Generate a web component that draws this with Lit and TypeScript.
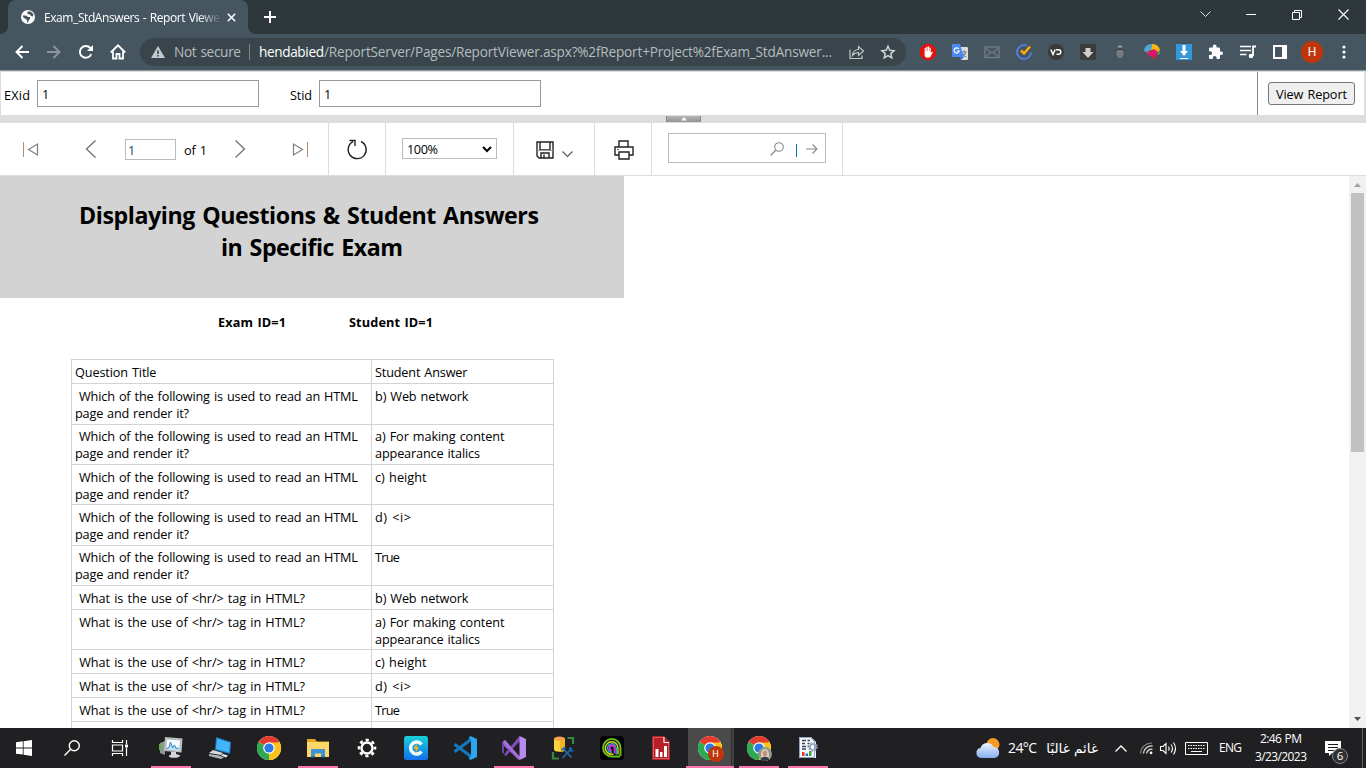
import { LitElement, html, svg, css } from "lit";
import { customElement, property } from "lit/decorators.js";
import { styleMap } from "lit/directives/style-map.js";
import { classMap } from "lit/directives/class-map.js";

/** A single line of text, tracked so that it fills the requested width. */
@customElement("fit-text")
class FitText extends LitElement {
  @property() text = "";
  @property({ type: Number }) width = 0;

  static styles = css`
    :host { display: inline-block; white-space: pre; flex: none; }
    .line { display: inline-block; word-spacing: 0.07em; }
  `;

  render() {
    return html`<span class="line">${this.text}</span>`;
  }

  updated() {
    const line = this.renderRoot.querySelector(".line") as HTMLElement;
    line.style.letterSpacing = "0px";
    const natural = line.getBoundingClientRect().width;
    const count = [...this.text].length;
    line.style.letterSpacing = `${(this.width - natural) / Math.max(1, count - 1)}px`;
    this.style.width = `${this.width}px`;
  }
}

const fit = (text: string, width: number, cls = "") =>
  html`<fit-text class=${cls} .text=${text} .width=${width}></fit-text>`;

const icon = (w: number, h: number, body: unknown) =>
  html`<svg width=${w} height=${h} viewBox="0 0 ${w} ${h}" fill="none">${body}</svg>`;

const stroke = (d: string, color = "#fff", width = 1) =>
  svg`<path d=${d} stroke=${color} stroke-width=${width} fill="none"></path>`;
const fill = (d: string, color = "#fff") => svg`<path d=${d} fill=${color}></path>`;

/* ---------- extension icons, 16 x 16 ---------- */
const extensions = [
  icon(16, 16, svg`${fill("M4.7 0h6.6L16 4.7v6.6L11.3 16H4.7L0 11.3V4.7z", "#e1120d")}
    ${fill("M4.6 7.6V4.3c0-.8 1.2-.8 1.2 0V7h.4V3.200c0-.8 1.300-.8 1.300 0V7h.4V2.800c0-.8 1.300-.8 1.300 0V7h.4V4c0-.8 1.200-.8 1.200 0v5l.9-1.100c.6-.6 1.400-.1 1 .6l-2.100 4c-.6.8-1.200 1.200-2.600 1.200-2.400 0-3.400-1.200-3.400-3z")}`),
  icon(16, 16, svg`${fill("M7 3h8a1 1 0 0 1 1 1v11a1 1 0 0 1-1 1H9z", "#dcdcdc")}
    ${stroke("M9.500 8h5M12 6.500V8M13.800 8c-.5 2-1.700 3.500-3.500 4.500M10.500 9.500c.6 1.500 1.800 2.600 3.600 3.300", "#6a7a80", 1.1)}
    ${fill("M1 0h7l3.800 13H1a1 1 0 0 1-1-1V1a1 1 0 0 1 1-1z", "#4a8af4")}
    ${stroke("M6.800 5A2.600 2.600 0 1 0 7.200 7H4.800", "#fff", 1.2)}${fill("M8 13h3.800L9 16z", "#3767c9")}`),
  icon(16, 16, svg`<rect x="1" y="3" width="14" height="10.500" stroke="#6f7a80" stroke-width="1.500"></rect>
    ${stroke("M1.500 3.500l5 5h3l5-5M1.500 13.500l5-5M14.500 13.500l-5-5", "#6f7a80", 1.300)}`),
  icon(16, 16, svg`${stroke("M10.500 1.500A7 7 0 1 0 15 8.500", "#5a78dc", 2)}${stroke("M5 6.500l3 3 6-7", "#ffaa0c", 2.500)}`),
  icon(16, 16, svg`<circle cx="8" cy="8" r="8" fill="#3a3a3c"></circle>${stroke("M2.800 5.500L5 10.500l2.200-5", "#fff", 1.500)}${stroke("M8 5.700h2.500a2.300 2.300 0 0 1 0 4.600H8.500", "#fff", 1.500)}`),
  icon(16, 16, svg`<rect width="16" height="16" rx="1" fill="#3c3c3e"></rect>${fill("M5.500 4h5v4h3L8 14 2.500 8h3z", "#cfcfcf")}`),
  icon(16, 16, svg`${fill("M5.500 3.500c0-3 5-3 5 0z", "#9b9b9b")}<ellipse cx="8" cy="9.500" rx="3.800" ry="4.500" fill="#777b7c"></ellipse>
    ${fill("M5 6c1-2 5-2 6 0z", "#3b3f40")}${stroke("M3 6l2 1M2.500 9.500H4M3 13l2-1.500M13 6l-2 1M13.500 9.500H12M13 13l-2-1.500", "#3b4448", 1)}`),
  icon(16, 16, svg`${fill("M0 7C0 3 3 0 8 0l-1 6-4 2z", "#46a7dc")}${fill("M8 0c4 0 7 2 8 6l-3 3-6-3z", "#f7b512")}
    ${fill("M4 8l6-3 4 3 1 2-5 3-5-1z", "#e0126b")}${fill("M13 9l3-2v3l-2 1z", "#3aa64b")}${fill("M8 12h4l-1 4z", "#d82434")}${fill("M1 7l4 1-1 2z", "#e45728")}`),
  icon(16, 16, svg`<rect width="16" height="16" fill="#3498db"></rect>${fill("M6.500 1h3v6H12l-4 5-4-5h2.500z")}${stroke("M4 14.500h8", "#fff", 1)}`),
  icon(16, 16, svg`${fill("M13.200 7.500H12V4.800A1.300 1.300 0 0 0 10.700 3.500H8.500V2.300a1.800 1.800 0 0 0-3.600 0v1.200H2.300A1.300 1.300 0 0 0 1 4.800v2.500h1.200a1.900 1.900 0 0 1 0 3.800H1v2.600A1.300 1.300 0 0 0 2.300 15h2.500v-1.200a1.900 1.900 0 0 1 3.800 0V15h2.100a1.300 1.300 0 0 0 1.300-1.300v-2.600h1.200a1.800 1.800 0 0 0 0-3.600z")}`),
  icon(16, 16, svg`${stroke("M0 2.500h11M0 6.500h11M0 10.500h6.500", "#fff", 1.700)}${stroke("M13 12V2.500h3", "#fff", 1.800)}<circle cx="11" cy="12" r="2.300" fill="#fff"></circle>`),
  icon(14, 14, svg`<rect x="1" y="1" width="12" height="12" stroke="#fff" stroke-width="2"></rect><rect x="9" y="1" width="4" height="12" fill="#fff"></rect>`),
  html`<div class="avatar">H</div>`,
  icon(4, 14, svg`<circle cx="2" cy="2" r="1.600" fill="#fff"></circle><circle cx="2" cy="7" r="1.600" fill="#fff"></circle><circle cx="2" cy="12" r="1.600" fill="#fff"></circle>`),
];

/* ---------- taskbar icons ---------- */
const chromeMark = svg`
  <circle cx="12" cy="12" r="12" fill="#fff"></circle>
  ${fill("M12 12L1.600 6A12 12 0 0 1 22.400 6z", "#e33b2e")}
  ${fill("M12 12L22.400 6A12 12 0 0 1 12 24z", "#fcc31e")}
  ${fill("M12 12v12A12 12 0 0 1 1.600 6z", "#2da94f")}
  ${fill("M12 6.500h10.700A12 12 0 0 1 12 24l4.800-9.300z", "#fcc31e")}
  <circle cx="12" cy="12" r="5.800" fill="#fff"></circle><circle cx="12" cy="12" r="4.600" fill="#2a79e8"></circle>`;

interface App { art: unknown; open?: boolean; active?: boolean }
const apps: App[] = [
  { open: true, art: icon(24, 24, svg`${fill("M1 7l5-2v14l-5-2z", "#8f9694")}${fill("M0 8h2v6H0z", "#58b33a")}
    ${fill("M6 1l17.500 1.500-1 14L5 15z", "#b9bfc0")}${fill("M8 3.500l13 1-.8 10L7.500 13z", "#f7fbfd")}
    ${fill("M7.500 13l3-1.500 1.500-5 2 5 2-2 1.500 3 3-.5-.3 2.500z", "#bfe2f5")}${stroke("M7.500 12.500l2.500-1 1.500-5.500 2 6 2-3 1.500 3.500 3-.5", "#2787c9", 1)}
    ${fill("M12 15.500l5 .4v2l4 1.400c.5 3-10 3.500-11.500.7l2.500-1.500z", "#d5d8d9")}`) },
  { art: icon(24, 24, svg`${fill("M8 1l15 5-1 12L7 14z", "#1c7dc4")}${fill("M9 2.500l13 4.300-.8 9.700L8 13z", "#42b4f7")}${fill("M5 14l10 3-2 2-12-2z", "#d5dadd")}${fill("M1 18l10 1.500 5 2-3 1.500L1 20z", "#aeb5ba")}${fill("M15 18l5 1.500-2 2-5-2z", "#e5e8ea")}`) },
  { art: icon(24, 24, chromeMark) },
  { open: true, art: icon(24, 24, svg`${fill("M1 3h8l2 2.500h12V21H1z", "#e8a51e")}${fill("M1 6h22v15H1z", "#ffd768")}${fill("M5 13h14v8h-4v-3H9v3H5z", "#3c93d6")}${fill("M9 17.500h6V21H9z", "#ffd768")}${fill("M5 20h4v1.500H5zM15 20h4v1.500h-4z", "#2473b5")}`) },
  { art: icon(20, 20, svg`<circle cx="10" cy="10" r="5.500" stroke="#fff" stroke-width="2.400"></circle>
      <circle cx="10" cy="10" r="8" stroke="#fff" stroke-width="2.600" stroke-dasharray="3.140 3.143" stroke-dashoffset="1.570"></circle>`) },
  { art: icon(24, 24, svg`<defs><linearGradient id="c" x1="0" y1="0" x2="0" y2="1"><stop stop-color="#18d0d5"></stop><stop offset="1" stop-color="#1470ee"></stop></linearGradient></defs>
      <rect width="24" height="24" rx="2.500" fill="url(#c)"></rect>${stroke("M17.500 8.500A6 6 0 1 0 17.500 15.500", "#f4fbff", 3.400)}${fill("M13 6.500L9.500 13H12l-1 5 4-7h-2.500z", "#ffae25")}`) },
  { art: icon(24, 24, svg`${stroke("M1.500 8.300L18 20.500M1.500 15.700L18 3.500", "#1377bd", 3.200)}${fill("M17.500 0L24 3v18l-6.500 3-2-2 2.500-2V4l-2.500-2z", "#2aa5ee")}`) },
  { open: true, art: icon(24, 24, svg`${fill("M1 5l2-1 15 17-1.500 3L0 8z", "#8d5fc4")}${fill("M0 7l2-2v13l-2-1.500z", "#6e42a8")}${fill("M2 18.500L17.500 0l1.500 4L4 20z", "#7b4bb6")}${fill("M3 4l15 17V24L1 7z", "#a070d8")}${fill("M17.500 0L24 3v18l-6.500 3z", "#b88af0")}`) },
  { art: icon(24, 24, svg`${fill("M3 2.500v11c0 3 11 3 11 0v-11z", "#fbd33e")}${fill("M9 2.500h5v11c0 1.500-2 2.200-5 2.200z", "#f3b51f")}<ellipse cx="8.500" cy="2.800" rx="5.500" ry="2.200" fill="#f7a348"></ellipse>
      ${stroke("M16.500 2h5.500v6M2 16v6.500h6", "#348a43", 2.200)}${stroke("M11.500 12l9 9.500M21 12l-9.500 10M10.500 14l4-3M18.500 11.500l1 3 3 .5", "#1c6cb4", 1.700)}`) },
  { art: icon(24, 24, svg`<rect width="24" height="24" rx="3.500" fill="#000"></rect>
      ${stroke("M20.500 20v-8A8.700 8.700 0 1 0 12 20.500h8", "#66bf1d", 2)}${stroke("M18 18.500V12A6.300 6.300 0 1 0 12 18.300h1.500", "#e5da1c", 1.400)}
      ${stroke("M16.200 18.500V12A4.300 4.300 0 1 0 12 16.300", "#19b6da", 1.500)}${stroke("M14.500 17.500V12A2.500 2.500 0 1 0 12 14.500", "#d62ce0", 1.900)}`) },
  { art: icon(18, 24, svg`${fill("M0 0h12l6 6v18H0z", "#b71f27")}${stroke("M1.500 1.500h10v5.200h5v15.800h-15z", "#d98d90", .6)}${stroke("M12 1v5.500h5", "#fff", 1)}${fill("M3.500 13h3v8h-3zM8 16h2.500v5H8zM12 10h3v11h-3z")}`) },
  { active: true, open: true, art: html`<div class="badged">${icon(24, 24, chromeMark)}<span class="profile">H</span></div>` },
  { open: true, art: html`<div class="badged">${icon(24, 24, chromeMark)}<span class="photo">${icon(14, 14, svg`<circle cx="7" cy="7" r="7" fill="#8b9987"></circle>${fill("M3 10c-1-11 9-11 8 0l1 2-4 2-5-2z", "#d8cfbe")}<ellipse cx="7" cy="6.500" rx="2.200" ry="3" fill="#c49377"></ellipse>${fill("M2.500 12c2-3 7-3 9 0-2 2.600-7 2.600-9 0z", "#343b4b")}`)}</span></div>` },
  { open: true, art: icon(20, 24, svg`${fill("M1 1h12l5 5v16H1z", "#f4f8fc")}${stroke("M1.500 1.500h11l4 4v16h-15z", "#8da2bd", 1)}
      ${stroke("M4 4.500h4M4 7.500h3M4 10.500h4M4 13h4M9.500 4.500H12M9.500 7.500h2M9.500 10.500h2", "#3b4657", 1.300)}${fill("M4 16h2.500v4H4z", "#e33a2d")}${fill("M7.500 17.500H10V20H7.500z", "#2a67d1")}${fill("M11 15h2.500v5H11z", "#3ca83f")}
      <circle cx="15" cy="11" r="3" stroke="#8fa5bd" stroke-width="1.600"></circle><circle cx="15" cy="11" r="4.200" stroke="#8fa5bd" stroke-width="1.400" stroke-dasharray="1.650 1.650"></circle>`) },
];

const Q1 = [[" Which of the following is used to read an HTML", 283], ["page and render it?", 114]] as const;
const Q2 = [[" What is the use of <hr/> tag in HTML?", 230]] as const;
const A = {
  b: [["b) Web network", 93.5]], a: [["a) For making content", 129.5], ["appearance italics", 105]],
  c: [["c) height", 51.5]], d: [["d) <i>", 36]], t: [["True", 25]],
} as const;
type Lines = readonly (readonly [string, number])[];
interface Row { h: number; q: Lines; a: Lines; high?: boolean }
const rows: Row[] = [
  { h: 24, q: [["Question Title", 81.5]], a: [["Student Answer", 92.5]] },
  { h: 41, q: Q1, a: A.b }, { h: 40, q: Q1, a: A.a, high: true }, { h: 40, q: Q1, a: A.c }, { h: 41, q: Q1, a: A.d }, { h: 40, q: Q1, a: A.t, high: true },
  { h: 24, q: Q2, a: A.b }, { h: 40, q: Q2, a: A.a }, { h: 24, q: Q2, a: A.c }, { h: 24, q: Q2, a: A.d }, { h: 24, q: Q2, a: A.t },
  { h: 24, q: [], a: [] },
];

@customElement("app-root")
class AppRoot extends LitElement {
  static styles = css`
    :host { display: flex; flex-direction: column; width: 1366px; height: 768px; overflow: hidden; background: #fff; color: #000; font: 12.7px/17px "Open Sans", "Noto Sans", sans-serif; }
    * { box-sizing: border-box; }
    svg { display: block; flex: none; overflow: visible; }
    .tabs { height: 34px; background: #2d373c; display: flex; align-items: stretch; color: #fff; }
    .edge { width: 8px; background: #455660; display: flex; }
    .edge i { flex: 1; background: #2d373c; }
    .edge.l i { border-bottom-right-radius: 8px; }
    .edge.r i { border-bottom-left-radius: 8px; }
    .tab { width: 240px; background: #455660; border-radius: 8px 8px 0 0; display: flex; align-items: center; padding: 0 10px 0 13px; font-size: 12px; }
    .tab .title { width: 176px; margin: 0 7px 0 9px; -webkit-mask-image: linear-gradient(90deg, #000 155px, transparent 178px); mask-image: linear-gradient(90deg, #000 155px, transparent 178px); }
    .plus { display: flex; align-items: center; margin-left: 8px; flex: 1; }
    .win { display: grid; grid-template-columns: repeat(4, 46px); height: 29px; align-items: center; justify-items: center; }
    .nav { height: 37px; background: #455660; border-bottom: 1px solid #8e999f; display: flex; align-items: center; padding: 0 6px; }
    .nav .cell { width: 32px; height: 32px; display: grid; place-items: center; flex: none; }
    .omni { width: 766px; height: 28px; margin: 0 6px 0 6px; border-radius: 14px; background: #39454b; display: flex; align-items: center; padding: 0 11px 0 11px; color: #b4bcc0; font-size: 13.6px; line-height: 20px; }
    .omni fit-text { margin-top: -1px; }
    .omni .warn { margin-right: 9px; }
    .omni .bar { width: 1px; height: 16px; background: #7b868b; margin: 0 9px 0 8px; }
    .host { color: #fff; }
    .share { margin: 0 17px 0 17px; }
    .avatar { width: 22px; height: 22px; border-radius: 50%; background: #bf360c; color: #fff; font: 12px/22px Roboto, sans-serif; text-align: center; }
    .params { height: 44px; border: 1px solid #ddd; border-width: 1px 2px 0 1px; display: flex; align-items: center; padding-left: 3px; }
    .field { height: 27px; width: 222px; border: 1px solid #999; display: flex; align-items: center; padding: 2px 0 0 4px; }
    .label { margin-top: 4px; }
    .box1 { margin: 0 31px 0 7px; } .box2 { margin-left: 7px; }
    .submit { margin-left: auto; width: 107px; height: 43px; border-left: 1px solid #888; padding: 10px 0 0 10px; }
    .btn { width: 87px; height: 23px; border: 1px solid #767676; border-radius: 3px; background: #efefef; padding: 3px 0 0 7px; }
    .split { height: 8px; background: #ddd; display: flex; justify-content: center; padding-top: 1px; }
    .grip { width: 35px; height: 6px; margin-left: 1px; background: linear-gradient(#b7b7b7, #929292); display: grid; place-items: center; border: solid #888; border-width: 0 1px; }
    .tools { height: 53px; border-bottom: 1px solid #ddd; display: flex; }
    .group { border-right: 1px solid #ddd; display: flex; align-items: center; }
    .paging { width: 329px; padding-left: 22px; }
    .gap { width: 47px; } .gap.narrow { width: 28px; } .gap.last { width: 46px; }
    .page { width: 51px; height: 21px; border: 1px solid #bbb; padding: 2px 0 0 2px; margin: 0 8px 0 29px; color: #12496b; }
    .count-of { margin-top: 2px; }
    .refresh { width: 57px; padding-left: 19px; }
    .zoom { width: 128px; padding-left: 16px; }
    .select { width: 95px; height: 21px; border: 1px solid #bbb; display: flex; align-items: center; padding: 2px 4px 0 4px; justify-content: space-between; margin-bottom: 2px; }
    .save { width: 81px; padding: 1px 0 0 22px; gap: 8px; }
    .drop { padding-top: 9px; }
    .print { width: 57px; padding: 1px 0 0 19px; }
    .find { width: 191px; padding-left: 16px; }
    .search { width: 158px; height: 30px; border: 1px solid #bbb; display: flex; align-items: center; justify-content: flex-end; padding: 1px 7px 0 0; margin-bottom: 2px; }
    .cursor { width: 1px; height: 13px; background: #0078b5; margin: 3px 9px 0 12px; }
    .main { height: 552px; display: flex; overflow: hidden; justify-content: space-between; }
    .report { width: 624px; }
    .banner { height: 122px; background: #d3d3d3; padding-top: 23px; display: flex; flex-direction: column; align-items: center; font-size: 23.2px; font-weight: 700; line-height: 32px; }
    .banner .first { margin-right: 6px; }
    .ids { height: 61px; display: flex; padding: 16px 0 0 218px; gap: 63px; font-weight: 700; }
    .table { width: 483px; margin-left: 71px; border: 1px solid #d3d3d3; border-width: 0 1px; }
    .row { display: grid; grid-template-columns: 300px 181px; border-top: 1px solid #d3d3d3; }
    .td { padding: 4px 0 0 3px; display: flex; flex-direction: column; }
    .high .td { padding-top: 3px; }
    .td + .td { border-left: 1px solid #d3d3d3; margin-left: -1px; }
    .scroll { width: 17px; background: #f1f1f1; display: flex; flex-direction: column; align-items: center; padding: 7px 0 7px; }
    .thumb { width: 13px; height: 259px; background: #c1c1c1; margin-top: 6px; margin-bottom: auto; }
    .taskbar { height: 40px; background: #202023; display: flex; align-items: center; color: #fff; font-size: 12px; line-height: 18px; }
    .sys { width: 48px; height: 40px; display: grid; place-items: center; }
    .sys.last { margin-right: 2px; }
    .app { width: 49px; height: 40px; display: grid; place-items: center; border: solid transparent; border-width: 0 4px 0 5px; }
    .app.open { background: linear-gradient(#fe75ae, #fe75ae) bottom / 100% 2px no-repeat padding-box; }
    .app.active { border: 0; background: linear-gradient(#fe75ae, #fe75ae) bottom right / 48px 2px no-repeat, linear-gradient(90deg, transparent 3px, #4a4a4b 3px 46px, #303032 46px 47px, #424244 47px); }
    .badged { position: relative; width: 24px; height: 24px; }
    .profile, .photo { position: absolute; left: 10px; top: 10px; width: 16px; height: 16px; border-radius: 50%; }
    .profile { background: #bf360c; font: 9px/16px Roboto, sans-serif; text-align: center; }
    .photo { left: 11px; top: 11px; }
    .tray { margin-left: auto; display: flex; align-items: center; height: 40px; width: 390px; }
    .temp { font-size: 14px; margin: 0 9px 0 8px; }
    .sky { width: 52px; font: 13.5px/18px "DejaVu Sans", sans-serif; white-space: nowrap; direction: rtl; }
    .up { margin-left: 17px; } .wifi { margin-left: 13px; } .vol { margin-left: 7px; } .kbd { margin-left: 8px; }
    .lang { margin-left: 11px; }
    .clock { width: 54px; margin-left: 12px; display: flex; flex-direction: column; align-items: center; }
    .note { position: relative; margin-left: 17px; }
    .count { position: absolute; left: 7px; top: 7px; width: 16px; height: 16px; border: 1px solid #858585; border-radius: 50%; background: #303033; font-size: 11.5px; line-height: 14px; text-align: center; }
    .peek { width: 1px; height: 40px; background: #66666a; margin-left: 21px; }
  `;

  private renderBrowser() {
    return html`
      <div class="tabs">
        <div class="edge l"><i></i></div>
        <div class="tab">
          ${icon(14, 14, svg`<circle cx="7" cy="7" r="7" fill="#fff"></circle>${fill("M1.500 5.500h3.500l2 1.500h2v2l-1.500 1.500-.5 2h-1V10L2.500 7.500zM6.500 1.500h3L12.300 4l-.3 2.500-2-.5-1-1.500-2.500-.5z", "#455660")}`)}
          <div class="title">${fit("Exam_StdAnswers - Report Viewe", 176)}</div>
          ${icon(9, 9, stroke("M.8.8l7.400 7.400M8.200.8L.8 8.200", "#fff", 1.500))}
        </div>
        <div class="edge r"><i></i></div>
        <div class="plus">${icon(12, 12, stroke("M6 0v12M0 6h12", "#fff", 2))}</div>
        <div class="win">
          ${icon(11, 7, stroke("M.5.5l5 5 5-5", "#dfe2e3"))}
          ${icon(10, 2, stroke("M0 .5h10"))}
          ${icon(10, 10, stroke("M.5 2.500h7v7h-7zM2.500 2.500v-2h7v7h-2"))}
          ${icon(11, 11, stroke("M.5.5l10 10M10.500.5l-10 10", "#fff", 1.100))}
        </div>
      </div>
      <div class="nav">
        <div class="cell">${icon(14, 14, stroke("M14 7H1.500M7.500 1L1.500 7l6 6", "#fff", 1.900))}</div>
        <div class="cell">${icon(14, 14, stroke("M0 7h12.500M6.500 1l6 6-6 6", "#8c979c", 1.900))}</div>
        <div class="cell">${icon(14, 14, svg`${stroke("M12.300 9A5.900 5.900 0 1 1 11.300 3L12.500 4.500", "#fff", 2)}${fill("M14 0v6H8z")}`)}</div>
        <div class="cell">${icon(16, 16, stroke("M3 7.500V14.500h3.500v-4.500h3v4.500H13V7.500M.800 8.500L8 1.300l7.200 7.200", "#fff", 1.800))}</div>
        <div class="omni">
          <span class="warn">${icon(14, 12, svg`${fill("M7 0l7 12H0z", "#c3cacc")}${stroke("M7 4.500v3.500M7 9v1.500", "#39454b", 1.600)}`)}</span>
          ${fit("Not secure", 67)}<span class="bar"></span>
          ${fit("hendabied", 65, "host")}${fit("/ReportServer/Pages/ReportViewer.aspx?%2fReport+Project%2fExam_StdAnswer...", 508)}
          <span class="share">${icon(15, 14, svg`${stroke("M1 4.500v9h12V10.500", "#c3cacc", 1.200)}${stroke("M3.500 10.500c.5-4 2.500-6 6-6V1.500l5 4.500-5 4.500V7.500c-2.500 0-4.500 1-6 3z", "#c3cacc", 1.200)}`)}</span>
          ${icon(14, 14, stroke("M7 1.300l1.800 4 4.300.4-3.300 2.900 1 4.300L7 10.600l-3.800 2.300 1-4.300L.9 5.700l4.300-.4z", "#d4d9db", 1.400))}
        </div>
        ${extensions.map((e) => html`<div class="cell">${e}</div>`)}
      </div>`;
  }

  private renderReportTools() {
    return html`
      <div class="params">
        ${fit("EXid", 26, "label")}
        <div class="field box1">${fit("1", 7)}</div>
        ${fit("Stid", 22, "label")}
        <div class="field box2">${fit("1", 7)}</div>
        <div class="submit"><div class="btn">${fit("View Report", 71)}</div></div>
      </div>
      <div class="split"><div class="grip">${icon(6, 4, fill("M0 3.500L3 0l3 3.500z"))}</div></div>
      <div class="tools">
        <div class="group paging">
          ${icon(17, 15, svg`${stroke("M1.500 0v15", "#b38e70")}${stroke("M15.500 2v11L6.500 7.500z", "#7d7f83", 1.200)}`)}
          <span class="gap last"></span>
          ${icon(11, 18, stroke("M10.500.5L1.500 9l9 8.500", "#777", 1.400))}
          <div class="page">${fit("1", 7)}</div>
          ${fit("of 1", 23, "count-of")}
          <span class="gap narrow"></span>
          ${icon(11, 18, stroke("M.5.5l9 8.500-9 8.500", "#777", 1.400))}
          <span class="gap last"></span>
          ${icon(17, 15, svg`${stroke("M15.500 0v15", "#b38e70")}${stroke("M1.500 2v11l9-5.500z", "#7d7f83", 1.200)}`)}
        </div>
        <div class="group refresh">${icon(19, 20, stroke("M13 2.500A9 9 0 1 1 5 2.700M1.500 1.500H7v5.500", "#222", 1.400))}</div>
        <div class="group zoom"><div class="select">${fit("100%", 31)}${icon(10, 7, stroke("M1 1l4 4 4-4", "#000", 2))}</div></div>
        <div class="group save">
          ${icon(18, 18, svg`${stroke("M1 1h16v16H3l-2-2zM4 1v8h10V1M5 17v-5h8v5M8 13.500V17", "#222", 1.400)}${stroke("M1 9.500h16", "#999", 1)}`)}
          <span class="drop">${icon(11, 6, stroke("M.5.5l5 5 5-5", "#555", 1.100))}</span>
        </div>
        <div class="group print">${icon(20, 20, svg`${stroke("M5 7V1h9v6M5 15H1V7h18v8h-4M5 12h10v7H5z", "#222", 1.400)}${stroke("M3 9.500h2", "#555", 1)}`)}</div>
        <div class="group find"><div class="search">
          ${icon(14, 14, svg`<circle cx="9" cy="5" r="4.300" stroke="#888" stroke-width="1.100"></circle>${stroke("M6 8L.5 13.500", "#888", 1.200)}`)}
          <span class="cursor"></span>
          ${icon(12, 10, stroke("M0 5h11M6.500.5L11 5 6.500 9.500", "#888", 1.100))}
        </div></div>
      </div>`;
  }

  private renderReport() {
    return html`
      <div class="main">
        <div class="report">
          <div class="banner">${fit("Displaying Questions & Student Answers", 460, "first")}${fit("in Specific Exam", 182)}</div>
          <div class="ids">${fit("Exam ID=1", 68)}${fit("Student ID=1", 84)}</div>
          <div class="table">
            ${rows.map((r) => html`<div class=${classMap({ row: true, high: !!r.high })} style=${styleMap({ height: `${r.h}px` })}>
              <div class="td">${r.q.map(([s, w]) => fit(s, w))}</div>
              <div class="td">${r.a.map(([s, w]) => fit(s, w))}</div>
            </div>`)}
          </div>
        </div>
        <div class="scroll">
          ${icon(7, 4, fill("M0 4l3.500-4L7 4z", "#a3a3a3"))}
          <div class="thumb"></div>
          ${icon(7, 4, fill("M0 0h7L3.500 4z", "#505050"))}
        </div>
      </div>`;
  }

  private renderTaskbar() {
    return html`
      <div class="taskbar">
        <div class="sys">${icon(16, 16, fill("M0 2.300l6.800-1v6.200H0zM7.600 1.200L16 0v7.500H7.600zM0 8.400h6.800v6.200L0 13.700zM7.600 8.400H16V16l-8.400-1.200z"))}</div>
        <div class="sys">${icon(16, 16, svg`<circle cx="10.300" cy="5.700" r="5" stroke="#fff" stroke-width="1.400"></circle>${stroke("M6.700 9.300L.5 15.500", "#fff", 1.400)}`)}</div>
        <div class="sys last">${icon(16, 16, svg`${stroke("M.5 0v2.500h10V0M.5 16v-2.500h10V16M.500 5h10v6H.500zM14.500 0v4M14.500 8v8", "#fff", 1.200)}${fill("M13 4.500h3v3h-3z")}`)}</div>
        ${apps.map((a) => html`<div class=${classMap({ app: true, open: !!a.open, active: !!a.active })}>${a.art}</div>`)}
        <div class="tray">
          ${icon(24, 20, svg`<circle cx="17" cy="6.500" r="6.500" fill="#f79a24"></circle><defs><linearGradient id="w" x1="0" y1="0" x2="0" y2="1"><stop stop-color="#edf4fe"></stop><stop offset="1" stop-color="#87aeef"></stop></linearGradient></defs>
            ${fill("M5 20a5 5 0 0 1-.5-9.900A7 7 0 0 1 17.500 9 5.600 5.600 0 0 1 19 20z", "url(#w)")}`)}
          ${fit("24°C", 29, "temp")}
          <span class="sky">غائم غالبًا</span>
          <span class="up">${icon(12, 7, stroke("M.5 6.500l5.500-5.500 5.500 5.500", "#fff", 1.300))}</span>
          <span class="wifi">${icon(13, 12, svg`${stroke("M.5 11.500A11 11 0 0 1 12 1", "#888", 1.200)}${stroke("M3.500 11.500A8 8 0 0 1 12.500 4M6.500 11.500A5 5 0 0 1 12.500 7.300", "#ddd", 1.300)}<circle cx="11" cy="10.800" r="1.400" fill="#fff"></circle>`)}</span>
          <span class="vol">${icon(17, 13, svg`${stroke("M.5 4.500H3L6 1.500v10L3 8.500H.5zM8.500 4.500q1.500 2 0 4M11 2.500q3 4 0 8M13.500.5q4 6 0 12", "#fff", 1.100)}`)}</span>
          <span class="kbd">${icon(23, 13, svg`${stroke("M.5.5h22v12H.5z")}<path d="M3 3.500h17M3 6.500h17" stroke="#fff" stroke-dasharray="1.500 1"></path>${stroke("M6 9.500h11")}`)}</span>
          ${fit("ENG", 23, "lang")}
          <div class="clock">${fit("2:46 PM", 42)}${fit("3/23/2023", 52)}</div>
          <div class="note">${icon(16, 15, svg`${fill("M0 0h16v12H7l-3 3v-3H0z")}${stroke("M3 3.500h10M3 6.500h10M3 9.500h6", "#202023")}`)}<span class="count">6</span></div>
          <div class="peek"></div>
        </div>
      </div>`;
  }

  render() {
    return html`${this.renderBrowser()}${this.renderReportTools()}${this.renderReport()}${this.renderTaskbar()}`;
  }
}
